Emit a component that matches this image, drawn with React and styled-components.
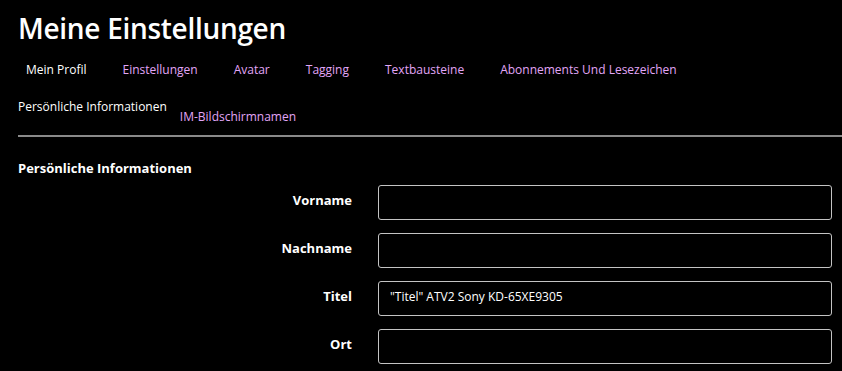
import React from 'react'
import styled, { createGlobalStyle } from 'styled-components'

const GlobalStyle = createGlobalStyle`
  html, body {
    margin: 0;
    background: #000;
  }
  body {
    font-family: 'Open Sans', 'Noto Sans', sans-serif;
    color: #fff;
  }
`

const tabs = [
  'Mein Profil',
  'Einstellungen',
  'Avatar',
  'Tagging',
  'Textbausteine',
  'Abonnements Und Lesezeichen',
]

const fields = [
  { label: 'Vorname', value: '' },
  { label: 'Nachname', value: '' },
  { label: 'Titel', value: '"Titel" ATV2 Sony KD-65XE9305' },
  { label: 'Ort', value: '' },
]

function App() {
  return (
    <Page>
      <GlobalStyle />
      <Title>Meine Einstellungen</Title>
      <TabBar>
        {tabs.map((t, i) => (
          <Tab key={t} active={i === 0}>
            {t}
          </Tab>
        ))}
      </TabBar>
      <SubTabBar>
        <SubTab active>Persönliche Informationen</SubTab>
        <SubTab>IM-Bildschirmnamen</SubTab>
      </SubTabBar>
      <Divider />
      <SectionTitle>Persönliche Informationen</SectionTitle>
      <Form>
        {fields.map((f) => (
          <Row key={f.label}>
            <Label>{f.label}</Label>
            <Input defaultValue={f.value} />
          </Row>
        ))}
      </Form>
    </Page>
  )
}

const Page = styled.div`
  padding: 0 10px 0 18px;
`

const Title = styled.h1`
  margin: 0;
  padding-top: 9px;
  font-size: 28px;
  font-weight: 600;
  line-height: 38px;
  letter-spacing: -0.3px;
`

const TabBar = styled.div`
  display: flex;
  gap: 36px;
  padding: 15px 0 0 8px;
`

const Tab = styled.div`
  font-size: 12px;
  line-height: 16px;
  color: ${(p) => (p.active ? '#fff' : '#e2a6f7')};
  cursor: pointer;
`

const SubTabBar = styled.div`
  display: flex;
  align-items: flex-start;
  gap: 13px;
  padding-top: 21px;
  height: 36px;
`

const SubTab = styled.div`
  font-size: 12px;
  line-height: 16px;
  color: ${(p) => (p.active ? '#fff' : '#e2a6f7')};
  padding-top: ${(p) => (p.active ? '0' : '10px')};
  cursor: pointer;
`

const Divider = styled.div`
  height: 2px;
  background: #8a8a8a;
  margin-right: -10px;
`

const SectionTitle = styled.h2`
  margin: 0;
  padding-top: 22px;
  font-size: 13px;
  font-weight: 700;
  line-height: 18px;
`

const Form = styled.div`
  display: flex;
  flex-direction: column;
  gap: 13px;
  padding-top: 8px;
`

const Row = styled.div`
  display: grid;
  grid-template-columns: 334px 454px;
  column-gap: 26px;
  align-items: center;
`

const Label = styled.label`
  text-align: right;
  font-size: 13px;
  font-weight: 700;
  padding-bottom: 6px;
`

const Input = styled.input`
  box-sizing: border-box;
  height: 35px;
  width: 100%;
  background: #000;
  border: 1px solid #c4c4c4;
  border-radius: 3px;
  color: #fff;
  font-family: 'Open Sans', 'Noto Sans', sans-serif;
  font-size: 12px;
  padding: 0 11px 4px;
  outline: none;
`

export default App
